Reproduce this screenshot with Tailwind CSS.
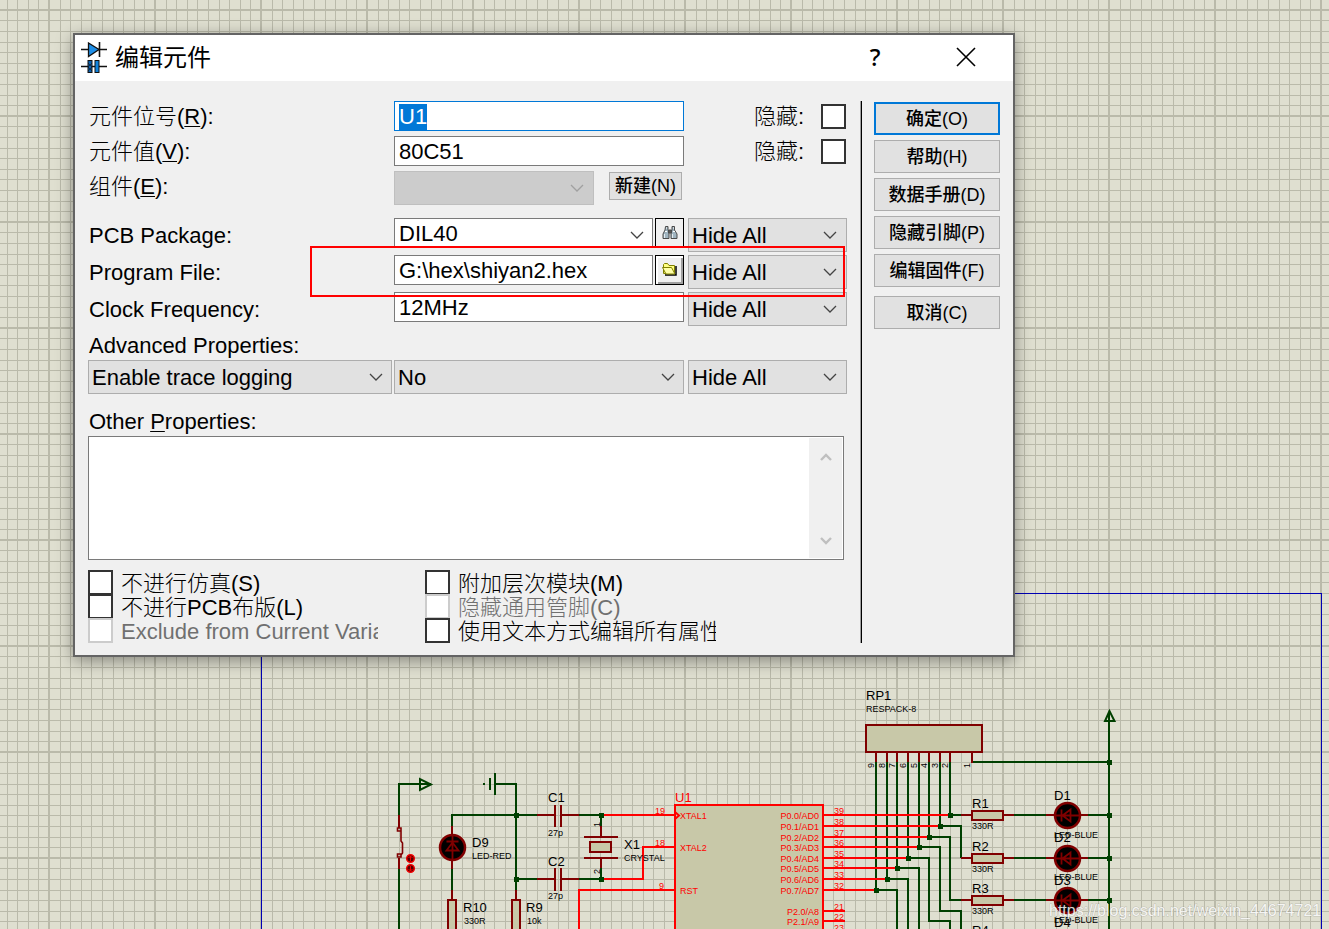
<!DOCTYPE html>
<html lang="zh-CN">
<head>
    <meta charset="UTF-8">
    <meta name="viewport" content="width=device-width, initial-scale=1.0">
    <script src="https://cdn.jsdelivr.net/npm/@tailwindcss/browser@4"></script>
    <title>编辑元件</title>
</head>
<body class="bg-[#dfdfd0] text-black font-['Liberation_Sans','Noto_Sans_CJK_SC',sans-serif]">

<main class="relative min-h-screen overflow-hidden">

    <!-- schematic sheet -->
    <svg class="absolute inset-0 w-full h-full" fill="none" stroke-width="2" aria-label="Schematic">
        <defs>
            <pattern id="grid" x="48" y="9" width="106" height="106" patternUnits="userSpaceOnUse">
                <path fill="#babaaa" d="M0 0h2v106h-2zM12 0h1v106h-1zM22 0h1v106h-1zM33 0h1v106h-1zM43 0h1v106h-1zM54 0h1v106h-1zM65 0h1v106h-1zM75 0h1v106h-1zM86 0h1v106h-1zM96 0h1v106h-1z"/>
                <path fill="#babaaa" d="M0 0v2h106v-2zM0 11v1h106v-1zM0 22v1h106v-1zM0 33v1h106v-1zM0 43v1h106v-1zM0 54v1h106v-1zM0 64v1h106v-1zM0 75v1h106v-1zM0 86v1h106v-1zM0 96v1h106v-1z"/>
            </pattern>
            <g id="led">
                <circle r="12.5" fill="#000" stroke="#800000" stroke-width="2.5"/>
                <path stroke="#800000" stroke-width="1.8" d="M-13 0H13M-6 -6V6M-5 0L3 -6V6Z"/>
            </g>
            <rect id="node" x="-2" y="-3" width="5" height="5" fill="#004000"/>
        </defs>
        <rect width="100%" height="100%" fill="url(#grid)"/>
        <path stroke="#0000b4" stroke-width="1" d="M261.5 940V593.5H1321.5V940" shape-rendering="crispEdges"/>

        <!-- green wires -->
        <g stroke="#004000" shape-rendering="crispEdges">
            <path d="M399 815V784H431M399 869V930"/>
            <path d="M483 784H485M490 778V790M495 773V795M495 784H516V890"/>
            <path d="M452 826V815H537M579 815H601V826M516 879H537M579 879H601V868M452 869V890"/>
            <path d="M876 762V890M887 762V879M897 762V868M908 762V858M919 762V847M929 762V837M940 762V826M950 762V815"/>
            <path d="M972 762H1109M1109 712V930"/>
            <path d="M950 815H961M940 826H961V858M929 837H950V900H961M919 847H940V911H961V930M908 858H929V921H950V930M897 868H919V930M887 879H908V930M876 890H897V930"/>
            <path d="M1014 815H1046M1088 815H1109M1014 858H1046M1088 858H1109M1014 900H1046M1088 900H1109"/>
        </g>
        <g stroke="#004000">
            <path d="M420 779V790L431 784.5Z"/>
            <path d="M1109.5 711L1105 721H1114.500Z"/>
        </g>

        <!-- component pins and bodies -->
        <g stroke="#800000" shape-rendering="crispEdges">
            <path d="M399 815V828M399 858V869M537 815H555M561 815H579M537 879H555M561 879H579"/>
            <path d="M555 805V827M561 805V827M555 868V891M561 868V891"/>
            <path d="M601 826V837M601 858V868M584 837H618M584 858H618"/>
            <path d="M452 826V835M452 860V869M452 890V899M516 890V899"/>
            <path d="M876 752V762M887 752V762M897 752V762M908 752V762M919 752V762M929 752V762M940 752V762M950 752V762M972 752V763"/>
            <path d="M961 815H971M1003 815H1014M961 858H971M1003 858H1014M961 900H971M1003 900H1014"/>
            <path d="M1046 815H1055M1080 815H1088M1046 858H1055M1080 858H1088M1046 900H1055M1080 900H1088"/>
            <g fill="#c8c8a8">
                <rect x="590" y="842" width="21" height="10"/>
                <rect x="448" y="900" width="8" height="40"/>
                <rect x="512" y="900" width="8" height="40"/>
                <rect x="866" y="725" width="116" height="27"/>
                <rect x="972" y="811" width="31" height="9"/>
                <rect x="972" y="854" width="31" height="9"/>
                <rect x="972" y="896" width="31" height="9"/>
            </g>
        </g>
        <path stroke="#800000" stroke-width="1.600" d="M397.500 828H401V831H397.500ZM397.500 854H401V857H397.500ZM401 831V841L402.500 843V853L401 855"/>

        <use href="#led" transform="translate(452.500 847.500) rotate(90)"/>
        <use href="#led" x="1067.500" y="815.500"/>
        <use href="#led" x="1067.500" y="858.500"/>
        <use href="#led" x="1067.500" y="900.500"/>

        <!-- switch toggles -->
        <g fill="#500" stroke="#f00000" stroke-width="1.500">
            <circle cx="410.500" cy="858.500" r="3.800"/>
            <circle cx="410.500" cy="868.500" r="3.800"/>
            <path d="M410.500 856V861M408.500 858L410.500 856L412.500 858M410.500 866V871M408.500 869L410.500 871L412.500 869" stroke-width="1"/>
        </g>

        <!-- microcontroller -->
        <g stroke="#f00" shape-rendering="crispEdges">
            <rect x="675" y="805" width="148" height="140" fill="#c8c8a8"/>
            <path d="M601 815H675M601 879H643V847H675M579 930V890H675"/>
            <path d="M823 815H950M823 826H940M823 837H929M823 847H919M823 858H908M823 868H897M823 879H887M823 890H876M823 911H845M823 921H845"/>
        </g>
        <path stroke="#f00" d="M675 812L679 815.500L675 819"/>

        <g>
            <use href="#node" x="516" y="816"/><use href="#node" x="516" y="880"/>
            <use href="#node" x="601" y="816"/><use href="#node" x="601" y="880"/>
            <use href="#node" x="950" y="816"/><use href="#node" x="940" y="827"/>
            <use href="#node" x="929" y="838"/><use href="#node" x="919" y="848"/>
            <use href="#node" x="908" y="859"/><use href="#node" x="897" y="869"/>
            <use href="#node" x="887" y="880"/><use href="#node" x="876" y="891"/>
            <use href="#node" x="1109" y="763"/><use href="#node" x="1109" y="816"/>
            <use href="#node" x="1109" y="859"/><use href="#node" x="1109" y="901"/>
        </g>

        <g fill="#000" class="text-[13px]">
            <text x="548" y="802">C1</text><text x="548" y="866">C2</text>
            <text x="472" y="847">D9</text><text x="624" y="849">X1</text>
            <text x="463" y="912">R10</text><text x="526" y="912">R9</text>
            <text x="866" y="700">RP1</text>
            <text x="972" y="808">R1</text><text x="972" y="851">R2</text>
            <text x="972" y="893">R3</text><text x="972" y="935">R4</text>
            <text x="1054" y="800">D1</text><text x="1054" y="842">D2</text>
            <text x="1054" y="885">D3</text><text x="1054" y="927">D4</text>
        </g>
        <g fill="#000" class="text-[9px]">
            <text x="548" y="836">27p</text><text x="548" y="899">27p</text>
            <text x="472" y="859">LED-RED</text><text x="624" y="861">CRYSTAL</text>
            <text x="464" y="924">330R</text><text x="527" y="924">10k</text>
            <text x="866" y="712">RESPACK-8</text>
            <text x="972" y="829">330R</text><text x="972" y="872">330R</text><text x="972" y="914">330R</text>
            <text x="1054" y="838">LED-BLUE</text><text x="1054" y="880">LED-BLUE</text><text x="1054" y="923">LED-BLUE</text>
            <text transform="translate(600 827) rotate(-90)">1</text>
            <text transform="translate(600 874) rotate(-90)">2</text>
            <text transform="translate(874 768) rotate(-90)">9</text>
            <text transform="translate(885 768) rotate(-90)">8</text>
            <text transform="translate(895 768) rotate(-90)">7</text>
            <text transform="translate(906 768) rotate(-90)">6</text>
            <text transform="translate(917 768) rotate(-90)">5</text>
            <text transform="translate(927 768) rotate(-90)">4</text>
            <text transform="translate(938 768) rotate(-90)">3</text>
            <text transform="translate(948 768) rotate(-90)">2</text>
            <text transform="translate(970 768) rotate(-90)">1</text>
        </g>
        <g fill="#f00" class="text-[9px]">
            <text x="675" y="802" class="text-[13px]">U1</text>
            <text x="655" y="814">19</text><text x="655" y="846">18</text><text x="659" y="889">9</text>
            <text x="680" y="819">XTAL1</text><text x="680" y="851">XTAL2</text><text x="680" y="894">RST</text>
            <g text-anchor="end">
                <text x="819" y="819">P0.0/AD0</text><text x="819" y="830">P0.1/AD1</text>
                <text x="819" y="841">P0.2/AD2</text><text x="819" y="851">P0.3/AD3</text>
                <text x="819" y="862">P0.4/AD4</text><text x="819" y="872">P0.5/AD5</text>
                <text x="819" y="883">P0.6/AD6</text><text x="819" y="894">P0.7/AD7</text>
                <text x="819" y="915">P2.0/A8</text><text x="819" y="925">P2.1/A9</text>
            </g>
            <text x="834" y="814">39</text><text x="834" y="825">38</text>
            <text x="834" y="836">37</text><text x="834" y="846">36</text>
            <text x="834" y="857">35</text><text x="834" y="867">34</text>
            <text x="834" y="878">33</text><text x="834" y="889">32</text>
            <text x="834" y="910">21</text><text x="834" y="920">22</text><text x="834" y="931">23</text>
        </g>
        <text x="1049" y="916" class="text-[16px]" fill="#fff" fill-opacity="0.85" stroke="#555" stroke-opacity="0.25" stroke-width="1" paint-order="stroke">https://blog.csdn.net/weixin_44674721</text>
    </svg>

    <!-- edit component dialog -->
    <form class="absolute left-[73px] top-[33px] w-[942px] border-2 border-[#646464] bg-[#f0f0f0] text-[22px] leading-[26px] shadow-[0_4px_16px_rgba(0,0,0,0.4)]" onsubmit="return false">
        <header class="flex items-center h-[46px] bg-white pl-1.5">
            <svg class="w-[26px] h-8 mr-2" viewBox="0 0 26 32" stroke="#111" aria-hidden="true">
                <path d="M0 7.500H26M0 24.500H26" stroke-width="1.300"/>
                <path d="M7.500 1V14.500L18 7.500Z" fill="#1f8fe8" stroke-width="1.300"/>
                <path d="M18.500 0V15" stroke-width="1.600"/>
                <rect x="7" y="18.500" width="4" height="12" fill="#0a5fae"/>
                <path d="M7 21L11 25M7 25L11 29M7 29L11 25M7 25L11 21" stroke-width="0.600"/>
                <rect x="14" y="18.500" width="4" height="12" fill="#1183dc"/>
            </svg>
            <h1 class="text-2xl">编辑元件</h1>
            <button type="button" class="ml-auto w-[92px] h-full pb-0.5 font-['Noto_Sans'] text-2xl font-medium" aria-label="Help">?</button>
            <button type="button" class="w-[92px] h-full pr-0.5 pb-0.5 flex items-center justify-center" aria-label="Close">
                <svg class="w-5 h-5" viewBox="0 0 20 20" stroke="#000" stroke-width="1.600"><path d="M1 1L19 19M19 1L1 19"/></svg>
            </button>
        </header>

        <div class="flex px-[13px] pt-5 pb-3">
            <div class="flex-1 font-light">
                <div class="grid grid-cols-[306px_290px_1fr] gap-y-[5px] items-center">
                    <label for="ref" class="pl-px pt-0.5">元件位号(<u class="underline-offset-2 decoration-1">R</u>):</label>
                    <input id="ref" value="U1" autofocus class="h-[30px] px-1 pt-0.5 border border-[#0078d7] bg-white outline-none leading-[26px] selection:bg-[#0078d7] selection:text-white">
                    <label class="flex items-center justify-end gap-[17px] pr-px"><span class="pt-0.5">隐藏:</span>
                        <input type="checkbox" class="appearance-none w-[25px] h-[25px] border-2 border-[#333] bg-white">
                    </label>

                    <label for="val" class="pl-px pt-0.5">元件值(<u class="underline-offset-2 decoration-1">V</u>):</label>
                    <input id="val" value="80C51" class="h-[30px] px-1 pt-0.5 border border-[#7a7a7a] bg-white">
                    <label class="flex items-center justify-end gap-[17px] pr-px"><span class="pt-0.5">隐藏:</span>
                        <input type="checkbox" class="appearance-none w-[25px] h-[25px] border-2 border-[#333] bg-white">
                    </label>

                    <label for="element" class="pl-px self-start pt-[3px]">组件(<u class="underline-offset-2 decoration-1">E</u>):</label>
                    <div class="flex items-start gap-[15px] h-[34px]">
                        <div class="relative w-[200px]">
                            <select id="element" disabled class="block appearance-none w-full h-[34px] border border-[#bfbfbf] bg-[#ccc] opacity-100"></select>
                            <svg class="absolute right-2.5 top-[13px] w-3.5 h-2 pointer-events-none" viewBox="0 0 14 8" fill="none" stroke="#a0a0a0" stroke-width="1.300"><path d="M1 1L7 7L13 1"/></svg>
                        </div>
                        <button type="button" class="mt-px w-[73px] h-7 border border-[#adadad] bg-[#e1e1e1] text-lg leading-5 font-medium">新建(N)</button>
                    </div>
                </div>

                <div class="mt-[13px] flex flex-col gap-[3px]">
                    <div class="grid grid-cols-[306px_290px_1fr] h-[34px]">
                        <label for="package" class="pl-px pt-[5px]">PCB Package:</label>
                        <div class="flex gap-0.5 h-[30px]">
                            <div class="relative flex-1">
                                <select id="package" class="block appearance-none w-full h-[30px] px-1 pt-0.5 border border-[#7a7a7a] bg-white"><option>DIL40</option></select>
                                <svg class="absolute right-[9px] top-[13px] w-3.5 h-2 pointer-events-none" viewBox="0 0 14 8" fill="none" stroke="#444" stroke-width="1.300"><path d="M1 1L7 7L13 1"/></svg>
                            </div>
                            <button type="button" class="w-[29px] border border-black flex items-center justify-center" aria-label="Browse packages">
                                <svg class="w-4 h-4" viewBox="0 0 16 16" stroke="#4a4a4a" fill="#9fb4c0" aria-hidden="true">
                                    <path d="M3.500 1.500H6V5L7 7V13.500H1V9L3 5ZM10 1.500H12.500V5L15 9V13.500H9V7L10 5Z"/>
                                    <path d="M6.500 5H9.500V8H6.500Z" fill="#555"/>
                                    <path d="M2.500 9V13M10.500 9V13" stroke="#e4ecf0"/>
                                    <path d="M4 3H5M11 3H12M3 6.500H5M11 6.500H13" stroke="#fff"/>
                                </svg>
                            </button>
                        </div>
                        <div class="relative pl-1">
                            <select aria-label="PCB Package visibility" class="block appearance-none w-full h-[34px] px-[3px] pt-0.5 border border-[#adadad] bg-[#e1e1e1]"><option>Hide All</option></select>
                            <svg class="absolute right-2.5 top-[13px] w-3.5 h-2 pointer-events-none" viewBox="0 0 14 8" fill="none" stroke="#444" stroke-width="1.300"><path d="M1 1L7 7L13 1"/></svg>
                        </div>
                    </div>

                    <div class="relative grid grid-cols-[306px_290px_1fr] h-[34px]">
                        <label for="program" class="pl-px pt-[5px]">Program File:</label>
                        <div class="flex gap-0.5 h-[30px]">
                            <input id="program" value="G:\hex\shiyan2.hex" class="min-w-0 flex-1 px-1 pt-0.5 border border-[#7a7a7a] bg-white">
                            <button type="button" class="w-[29px] border border-black bg-[#f0f0f0] shadow-[inset_2px_2px_0_#fff,inset_-2px_-2px_0_#a0a0a0] flex items-center justify-center" aria-label="Browse program file">
                                <svg class="w-4 h-4" viewBox="0 0 16 16" aria-hidden="true">
                                    <path d="M3 13H14V4" stroke="#000" stroke-width="1.500" fill="none"/>
                                    <path d="M1.500 11.500V2.500L2.500 1.500H5.500L7 3.500H12.500V11.500Z" fill="#ffff80" stroke="#808000"/>
                                    <path d="M0.500 5.500H9.500L13 12H4Z" fill="#ffffa8" stroke="#808000"/>
                                </svg>
                            </button>
                        </div>
                        <div class="relative pl-1">
                            <select aria-label="Program File visibility" class="block appearance-none w-full h-[34px] px-[3px] pt-0.5 border border-[#adadad] bg-[#e1e1e1]"><option>Hide All</option></select>
                            <svg class="absolute right-2.5 top-[13px] w-3.5 h-2 pointer-events-none" viewBox="0 0 14 8" fill="none" stroke="#444" stroke-width="1.300"><path d="M1 1L7 7L13 1"/></svg>
                        </div>
                        <!-- highlight frame -->
                        <div class="absolute z-10 left-[222px] right-0.5 -top-[9px] -bottom-2 border-2 border-[#f00] pointer-events-none"></div>
                    </div>

                    <div class="grid grid-cols-[306px_290px_1fr] h-[34px]">
                        <label for="clock" class="pl-px pt-[5px]">Clock Frequency:</label>
                        <input id="clock" value="12MHz" class="h-[30px] px-1 pt-0.5 border border-[#7a7a7a] bg-white">
                        <div class="relative pl-1">
                            <select aria-label="Clock Frequency visibility" class="block appearance-none w-full h-[34px] px-[3px] pt-0.5 border border-[#adadad] bg-[#e1e1e1]"><option>Hide All</option></select>
                            <svg class="absolute right-2.5 top-[13px] w-3.5 h-2 pointer-events-none" viewBox="0 0 14 8" fill="none" stroke="#444" stroke-width="1.300"><path d="M1 1L7 7L13 1"/></svg>
                        </div>
                    </div>
                </div>

                <label for="advanced" class="block h-[34px] pl-px pt-[7px]">Advanced Properties:</label>
                <div class="grid grid-cols-[306px_290px_1fr]">
                    <div class="relative pr-0.5">
                        <select id="advanced" class="block appearance-none w-full h-[34px] px-[3px] pt-0.5 border border-[#adadad] bg-[#e1e1e1]"><option>Enable trace logging</option></select>
                        <svg class="absolute right-[11px] top-[13px] w-3.5 h-2 pointer-events-none" viewBox="0 0 14 8" fill="none" stroke="#444" stroke-width="1.300"><path d="M1 1L7 7L13 1"/></svg>
                    </div>
                    <div class="relative">
                        <select aria-label="Property value" class="block appearance-none w-full h-[34px] px-[3px] pt-0.5 border border-[#adadad] bg-[#e1e1e1]"><option>No</option></select>
                        <svg class="absolute right-[9px] top-[13px] w-3.5 h-2 pointer-events-none" viewBox="0 0 14 8" fill="none" stroke="#444" stroke-width="1.300"><path d="M1 1L7 7L13 1"/></svg>
                    </div>
                    <div class="relative pl-1">
                        <select aria-label="Advanced visibility" class="block appearance-none w-full h-[34px] px-[3px] pt-0.5 border border-[#adadad] bg-[#e1e1e1]"><option>Hide All</option></select>
                        <svg class="absolute right-2.5 top-[13px] w-3.5 h-2 pointer-events-none" viewBox="0 0 14 8" fill="none" stroke="#444" stroke-width="1.300"><path d="M1 1L7 7L13 1"/></svg>
                    </div>
                </div>

                <label for="other" class="block h-[42px] pl-px pt-[15px]">Other <u class="underline-offset-2 decoration-1">P</u>roperties:</label>
                <div class="flex mr-[3px] h-[124px] border border-[#7a7a7a] bg-white">
                    <textarea id="other" class="flex-1 resize-none outline-none px-1"></textarea>
                    <div class="w-[33px] my-px mr-px bg-[#f0f0f0] flex flex-col items-center justify-between pt-3.5 pb-3">
                        <button type="button" aria-label="Scroll up"><svg class="block w-3.5 h-2.5" viewBox="0 0 14 10" fill="none" stroke="#bfbfbf" stroke-width="2.400"><path d="M2 8L7 3L12 8"/></svg></button>
                        <button type="button" aria-label="Scroll down"><svg class="block w-3.5 h-2.5" viewBox="0 0 14 10" fill="none" stroke="#bfbfbf" stroke-width="2.400"><path d="M2 2L7 7L12 2"/></svg></button>
                    </div>
                </div>

                <div class="mt-2.5 grid grid-cols-[290px_291px] auto-rows-[24px] gap-x-[47px] pb-px whitespace-nowrap">
                    <label class="flex gap-2">
                        <input type="checkbox" class="appearance-none shrink-0 w-[25px] h-[25px] border-2 border-[#333] bg-white">
                        <span class="overflow-hidden h-[27px] pt-px">不进行仿真(S)</span>
                    </label>
                    <label class="flex gap-2">
                        <input type="checkbox" class="appearance-none shrink-0 w-[25px] h-[25px] border-2 border-[#333] bg-white">
                        <span class="overflow-hidden h-[27px] pt-px">附加层次模块(M)</span>
                    </label>
                    <label class="flex gap-2">
                        <input type="checkbox" class="appearance-none shrink-0 w-[25px] h-[25px] border-2 border-[#333] bg-white">
                        <span class="overflow-hidden h-[27px] pt-px">不进行PCB布版(L)</span>
                    </label>
                    <label class="flex gap-2 text-[#707070]">
                        <input type="checkbox" disabled class="appearance-none shrink-0 w-[25px] h-[25px] border-2 border-[#ccc] bg-white">
                        <span class="overflow-hidden h-[27px] pt-px">隐藏通用管脚(C)</span>
                    </label>
                    <label class="flex gap-2 text-[#707070]">
                        <input type="checkbox" disabled class="appearance-none shrink-0 w-[25px] h-[25px] border-2 border-[#ccc] bg-white">
                        <span class="overflow-hidden h-[27px] pt-px">Exclude from Current Variant</span>
                    </label>
                    <label class="flex gap-2">
                        <input type="checkbox" class="appearance-none shrink-0 w-[25px] h-[25px] border-2 border-[#333] bg-white">
                        <span class="overflow-hidden h-[27px] pt-px">使用文本方式编辑所有属性</span>
                    </label>
                </div>
            </div>

            <div class="ml-[13px] w-0.5 border-l border-l-[#a0a0a0] bg-black"></div>

            <div class="ml-3 mt-px w-[126px] flex flex-col gap-[5px] text-lg leading-6 font-medium">
                <button type="submit" class="h-[33px] border-2 border-[#0078d7] bg-[#e1e1e1]">确定(O)</button>
                <button type="button" class="h-[33px] border border-[#adadad] bg-[#e1e1e1]">帮助(H)</button>
                <button type="button" class="h-[33px] border border-[#adadad] bg-[#e1e1e1]">数据手册(D)</button>
                <button type="button" class="h-[33px] border border-[#adadad] bg-[#e1e1e1]">隐藏引脚(P)</button>
                <button type="button" class="h-[33px] border border-[#adadad] bg-[#e1e1e1]">编辑固件(F)</button>
                <button type="button" class="mt-1 h-[33px] border border-[#adadad] bg-[#e1e1e1]">取消(C)</button>
            </div>
        </div>
    </form>
</main>

<script>
    const ref = document.getElementById("ref");
    ref.focus();
    ref.select();
</script>
</body>
</html>
